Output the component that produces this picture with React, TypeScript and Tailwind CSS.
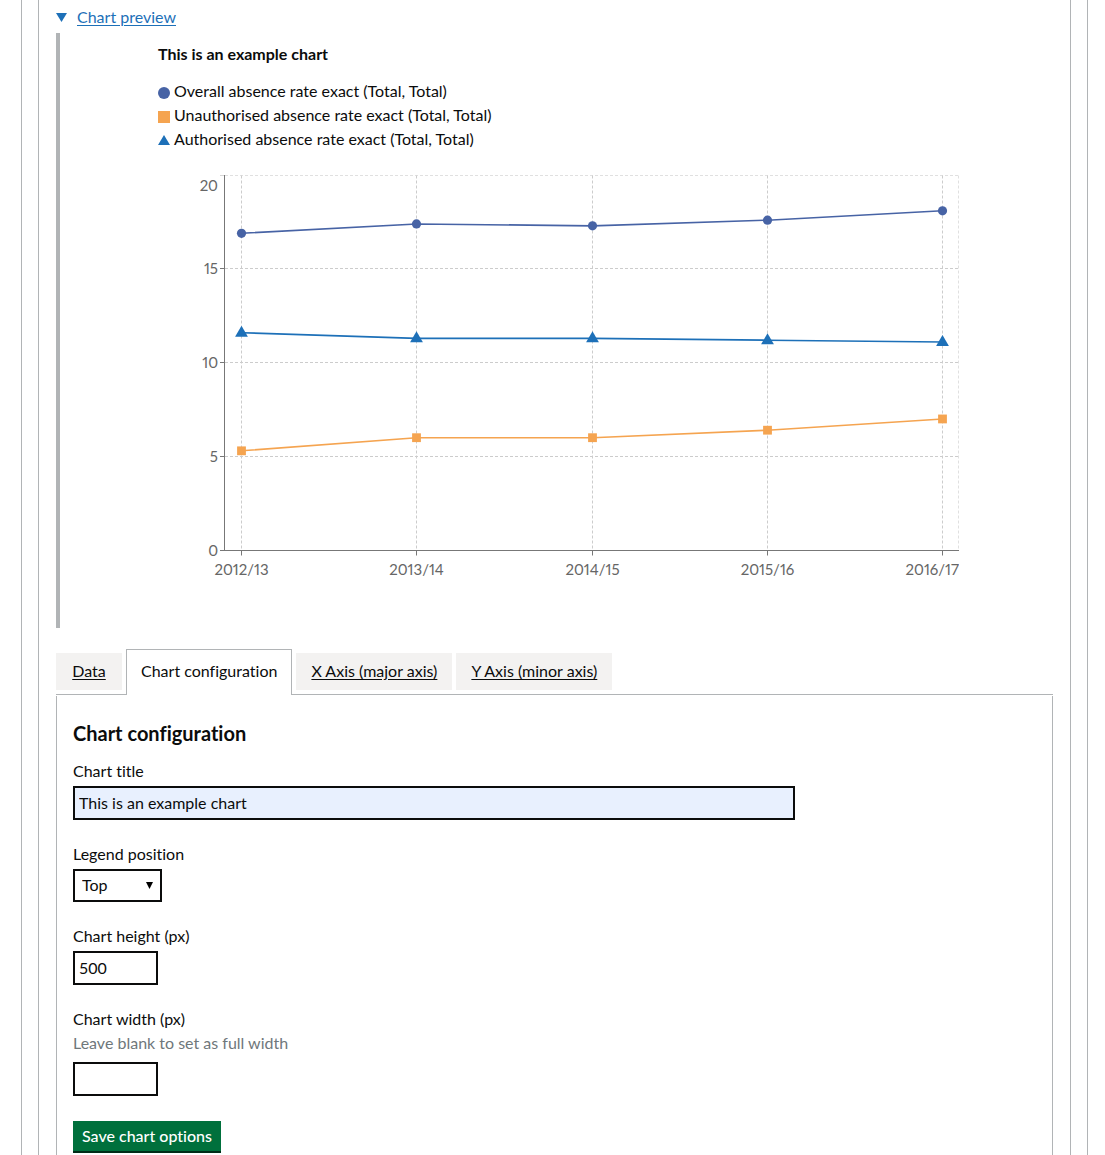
import { useState, type ReactNode } from 'react';

const YEARS = ['2012/13', '2013/14', '2014/15', '2015/16', '2016/17'];
const TICKS = [0, 5, 10, 15, 20];

type Shape = 'circle' | 'square' | 'triangle';

interface Series {
  name: string;
  color: string;
  shape: Shape;
  values: number[];
}

const SERIES: Series[] = [
  { name: 'Overall absence rate exact (Total, Total)', color: '#4763a5', shape: 'circle', values: [16.9, 17.4, 17.3, 17.6, 18.1] },
  { name: 'Unauthorised absence rate exact (Total, Total)', color: '#f5a450', shape: 'square', values: [5.3, 6, 6, 6.4, 7] },
  { name: 'Authorised absence rate exact (Total, Total)', color: '#1d70b8', shape: 'triangle', values: [11.6, 11.3, 11.3, 11.2, 11.1] },
];

const LEFT = 67;
const RIGHT = 801;
const TOP = 10.5;
const BOTTOM = 385.5;

const xAt = (i: number) => Math.round(83 + i * 175.25) + 0.5;
const yAt = (v: number) => BOTTOM - (v / 20) * (BOTTOM - TOP);
const gridY = (v: number) => Math.round(yAt(v)) - 0.5;

function Marker({ shape, x, y, color }: { shape: Shape; x: number; y: number; color: string }) {
  if (shape === 'circle') return <circle cx={x} cy={y} r={4.6} fill={color} />;
  if (shape === 'square') return <rect x={x - 4.4} y={y - 4.4} width={8.8} height={8.8} fill={color} />;
  return <path d={`M${x} ${y - 7}L${x + 6.4} ${y + 4}H${x - 6.4}Z`} fill={color} />;
}

function LegendIcon({ shape, color }: { shape: Shape; color: string }) {
  return (
    <svg className="mt-1 size-3 shrink-0" viewBox="0 0 12 12" fill={color} aria-hidden="true">
      {shape === 'circle' && <circle cx="6" cy="6" r="6" />}
      {shape === 'square' && <rect width="12" height="12" />}
      {shape === 'triangle' && <path d="M6 0L12 10H0Z" />}
    </svg>
  );
}

function Chart() {
  return (
    <svg className="block w-full" viewBox="0 0 801 435" role="img" aria-label="This is an example chart">
      <g stroke="#cccccc" strokeDasharray="3 2" fill="none">
        {TICKS.map((t) => (
          <line key={t} x1={LEFT} x2={RIGHT} y1={gridY(t)} y2={gridY(t)} strokeOpacity={t === 20 ? 0.6 : 1} />
        ))}
        {YEARS.map((year, i) => (
          <line key={year} x1={xAt(i)} x2={xAt(i)} y1={TOP} y2={BOTTOM} />
        ))}
        <line x1={RIGHT - 0.5} x2={RIGHT - 0.5} y1={TOP} y2={BOTTOM} strokeOpacity={0.6} />
      </g>
      <g stroke="#777777">
        <line x1={LEFT - 0.5} x2={LEFT - 0.5} y1={TOP - 0.5} y2={BOTTOM} />
        <line x1={LEFT - 0.5} x2={RIGHT} y1={BOTTOM} y2={BOTTOM} />
        {TICKS.map((t) => (
          <line key={t} x1={LEFT - 5} x2={LEFT} y1={gridY(t)} y2={gridY(t)} strokeOpacity={t === 20 ? 0.3 : 1} />
        ))}
        {YEARS.map((year, i) => (
          <line key={year} x1={xAt(i)} x2={xAt(i)} y1={BOTTOM} y2={BOTTOM + 5} />
        ))}
      </g>
      <g fill="#666666" className="text-[15px] proportional-nums">
        {TICKS.map((t) => (
          <text key={t} x={60} y={(t === 20 ? 20 : gridY(t)) + 5.5} textAnchor="end">
            {t}
          </text>
        ))}
        {YEARS.map((year, i) => (
          <text key={year} x={i === 4 ? 801 : xAt(i)} y={410} textAnchor={i === 4 ? 'end' : 'middle'}>
            {year}
          </text>
        ))}
      </g>
      {SERIES.map((s) => (
        <g key={s.name}>
          <polyline
            points={s.values.map((v, i) => `${xAt(i)},${yAt(v) - 0.3}`).join(' ')}
            fill="none"
            stroke={s.color}
            strokeWidth={1.6}
          />
          {s.values.map((v, i) => (
            <Marker key={YEARS[i]} shape={s.shape} x={xAt(i)} y={yAt(v) - 0.3} color={s.color} />
          ))}
        </g>
      ))}
    </svg>
  );
}

function Tab({ active, children }: { active?: boolean; children: ReactNode }) {
  return (
    <li className={active ? 'relative z-10 -mb-px' : 'mb-1'}>
      <a
        href="#chart-configuration"
        className={
          active
            ? 'block h-[46px] border border-b-0 border-[#b1b4b6] bg-white px-[14px] pt-[9px] text-center'
            : 'block h-[37px] min-w-[66px] bg-[#f3f2f1] px-[15px] pt-[6px] text-center underline underline-offset-2'
        }
      >
        {children}
      </a>
    </li>
  );
}

const INPUT = 'block h-[34px] border-2 border-[#0b0c0c] px-1 pb-[2px] outline-none';

export default function App() {
  const [title, setTitle] = useState('This is an example chart');
  const [height, setHeight] = useState('500');
  const [width, setWidth] = useState('');

  return (
    <div className="flex min-h-screen bg-white pl-[21px] pr-[17px] font-['Lato',sans-serif] text-[16px] leading-6 text-[#0b0c0c] [font-variant-ligatures:none]">
      <div className="flex grow border-x border-[#b1b4b6] px-4">
        <main className="grow border-x border-[#b1b4b6] px-[17px] pt-[5px]">
          <details open>
            <summary className="flex w-fit cursor-pointer list-none items-center gap-[10px] text-[#1d70b8]">
              <svg className="h-[9px] w-[11px]" viewBox="0 0 11 9" aria-hidden="true">
                <path d="M0 0H11L5.5 9Z" fill="currentColor" />
              </svg>
              <span className="underline underline-offset-2">Chart preview</span>
            </summary>
            <div className="mt-1 border-l-4 border-[#b1b4b6] pb-7 pl-[98px] pr-[94px] pt-[9px]">
              <p className="font-bold">This is an example chart</p>
              <ul className="mb-[14px] mt-[13px]">
                {SERIES.map((s) => (
                  <li key={s.name} className="flex h-6 items-center gap-1">
                    <LegendIcon shape={s.shape} color={s.color} />
                    {s.name}
                  </li>
                ))}
              </ul>
              <Chart />
            </div>
          </details>

          <ul className="mt-[21px] flex items-end gap-x-1 border-b border-[#b1b4b6]">
            <Tab>Data</Tab>
            <Tab active>Chart configuration</Tab>
            <Tab>X Axis (major axis)</Tab>
            <Tab>Y Axis (minor axis)</Tab>
          </ul>

          <form
            id="chart-configuration"
            className="mt-px border-x border-[#b1b4b6] px-4 pb-6 pt-[25px]"
            onSubmit={(e) => e.preventDefault()}
          >
            <h2 className="text-[20px] font-bold leading-6">Chart configuration</h2>

            <label htmlFor="title" className="mt-[14px] block">Chart title</label>
            <input
              id="title"
              className={`${INPUT} mt-[3px] w-3/4 bg-[#e8f0fe]`}
              value={title}
              onChange={(e) => setTitle(e.target.value)}
            />

            <label htmlFor="legend" className="mt-[22px] block">Legend position</label>
            <div className="relative mt-[3px] w-fit">
              <select
                id="legend"
                defaultValue="Top"
                className="block h-[33px] w-[89px] appearance-none border-2 border-[#0b0c0c] bg-white pb-[2px] pl-[7px] outline-none"
              >
                <option>Top</option>
                <option>Bottom</option>
                <option>None</option>
              </select>
              <svg className="pointer-events-none absolute right-[9px] top-[13px] h-[7px] w-[7px]" viewBox="0 0 7 7" aria-hidden="true">
                <path d="M0 0H7L3.5 7Z" fill="#000" />
              </svg>
            </div>

            <label htmlFor="height" className="mt-[22px] block">Chart height (px)</label>
            <input
              id="height"
              className={`${INPUT} mt-[3px] w-[85px]`}
              value={height}
              onChange={(e) => setHeight(e.target.value)}
            />

            <label htmlFor="width" className="mt-[22px] block">Chart width (px)</label>
            <p id="width-hint" className="text-[#6f777b]">Leave blank to set as full width</p>
            <input
              id="width"
              aria-describedby="width-hint"
              className={`${INPUT} mt-[7px] w-[85px]`}
              value={width}
              onChange={(e) => setWidth(e.target.value)}
            />

            <button
              type="submit"
              className="mt-[25px] block h-[30px] bg-[#00703c] px-[9px] font-medium text-white shadow-[0_2px_0_#002d18]"
            >
              Save chart options
            </button>
          </form>
        </main>
      </div>
    </div>
  );
}
